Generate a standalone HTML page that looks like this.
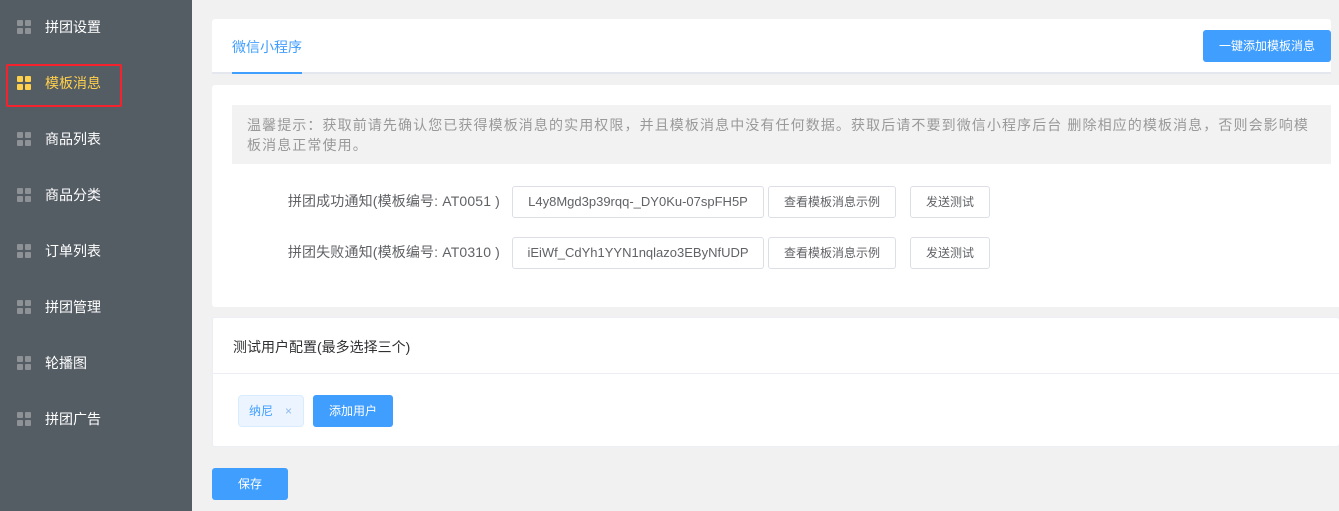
<!DOCTYPE html>
<html><head><meta charset="utf-8"><style>
*{margin:0;padding:0;box-sizing:border-box}
body{width:1339px;height:511px;background:#f1f1f1;font-family:"Liberation Sans","Noto Sans CJK SC",sans-serif;position:relative;overflow:hidden;font-size:14px;color:#606266}
.side{position:absolute;left:0;top:0;width:192px;height:511px;background:#545c64}
.item{position:absolute;left:0;width:192px;height:20px;color:#fff;font-size:14px;line-height:20px}
.item .ic{position:absolute;left:17px;top:3px;width:14px;height:14px}
.item .ic i{position:absolute;width:6px;height:6px;background:#8e9196;border-radius:1px}
.item span{position:absolute;left:45px;top:0}
.act{color:#ffd04b}.act .ic i{background:#ffd04b}
.abs{position:absolute}
.card{position:absolute;background:#fff;border-radius:3px}
.btn{position:absolute;background:#409eff;color:#fff;border-radius:3px;font-size:12px;text-align:center}
.wb{position:absolute;background:#fff;border:1px solid #dcdfe6;border-radius:3px;font-size:12px;text-align:center;color:#606266}
</style></head><body>
<div class="side">
<div class="abs" style="left:6px;top:64px;width:116px;height:43px;border:2px solid #f5222d;border-radius:2px"></div>
</div>
<div class="item" style="top:17px"><div class="ic"><i style="left:0;top:0"></i><i style="left:8px;top:0"></i><i style="left:0;top:8px"></i><i style="left:8px;top:8px"></i></div><span>拼团设置</span></div>
<div class="item act" style="top:73px"><div class="ic"><i style="left:0;top:0"></i><i style="left:8px;top:0"></i><i style="left:0;top:8px"></i><i style="left:8px;top:8px"></i></div><span>模板消息</span></div>
<div class="item" style="top:129px"><div class="ic"><i style="left:0;top:0"></i><i style="left:8px;top:0"></i><i style="left:0;top:8px"></i><i style="left:8px;top:8px"></i></div><span>商品列表</span></div>
<div class="item" style="top:185px"><div class="ic"><i style="left:0;top:0"></i><i style="left:8px;top:0"></i><i style="left:0;top:8px"></i><i style="left:8px;top:8px"></i></div><span>商品分类</span></div>
<div class="item" style="top:241px"><div class="ic"><i style="left:0;top:0"></i><i style="left:8px;top:0"></i><i style="left:0;top:8px"></i><i style="left:8px;top:8px"></i></div><span>订单列表</span></div>
<div class="item" style="top:297px"><div class="ic"><i style="left:0;top:0"></i><i style="left:8px;top:0"></i><i style="left:0;top:8px"></i><i style="left:8px;top:8px"></i></div><span>拼团管理</span></div>
<div class="item" style="top:353px"><div class="ic"><i style="left:0;top:0"></i><i style="left:8px;top:0"></i><i style="left:0;top:8px"></i><i style="left:8px;top:8px"></i></div><span>轮播图</span></div>
<div class="item" style="top:409px"><div class="ic"><i style="left:0;top:0"></i><i style="left:8px;top:0"></i><i style="left:0;top:8px"></i><i style="left:8px;top:8px"></i></div><span>拼团广告</span></div>

<div class="card" style="left:212px;top:19px;width:1119px;height:55px;border-radius:3px 3px 0 0">
<div class="abs" style="left:0;top:53px;width:1119px;height:2px;background:#e4e7ed"></div>
<div class="abs" style="left:20px;top:53px;width:70px;height:2px;background:#409eff"></div>
<div class="abs" style="left:20px;top:18px;color:#409eff;font-size:14px">微信小程序</div>
<div class="btn" style="left:991px;top:11px;width:128px;height:32px;line-height:32px">一键添加模板消息</div>
</div>

<div class="card" style="left:212px;top:85px;width:1127px;height:222px;border-radius:3px 0 0 3px">
<div class="abs" style="left:20px;top:20px;width:1099px;height:59px;background:#f2f2f2;color:#999;font-size:14px;line-height:20px;padding:10px 0 0 15px;white-space:nowrap;letter-spacing:1.1px">温馨提示：获取前请先确认您已获得模板消息的实用权限，并且模板消息中没有任何数据。获取后请不要到微信小程序后台 删除相应的模板消息，否则会影响模<br>板消息正常使用。</div>
<div class="abs" style="left:20px;top:106px;width:268px;text-align:right;font-size:14px;color:#606266;white-space:nowrap;letter-spacing:0.15px">拼团成功通知(模板编号: AT0051 )</div>
<div class="wb" style="left:300px;top:101px;width:252px;height:32px;line-height:30px;font-size:13px">L4y8Mgd3p39rqq-_DY0Ku-07spFH5P</div>
<div class="wb" style="left:556px;top:101px;width:128px;height:32px;line-height:30px">查看模板消息示例</div>
<div class="wb" style="left:698px;top:101px;width:80px;height:32px;line-height:30px">发送测试</div>
<div class="abs" style="left:20px;top:157px;width:268px;text-align:right;font-size:14px;color:#606266;white-space:nowrap;letter-spacing:0.15px">拼团失败通知(模板编号: AT0310 )</div>
<div class="wb" style="left:300px;top:152px;width:252px;height:32px;line-height:30px;font-size:13px">iEiWf_CdYh1YYN1nqlazo3EByNfUDP</div>
<div class="wb" style="left:556px;top:152px;width:128px;height:32px;line-height:30px">查看模板消息示例</div>
<div class="wb" style="left:698px;top:152px;width:80px;height:32px;line-height:30px">发送测试</div>
</div>

<div class="card" style="left:212px;top:317px;width:1127px;height:130px;border:1px solid #ebeef5;border-right:none">
<div class="abs" style="left:20px;top:19px;color:#303133;font-size:14px">测试用户配置(最多选择三个)</div>
<div class="abs" style="left:0;top:55px;width:1127px;height:1px;background:#ebeef5"></div>
<div class="abs" style="left:25px;top:77px;width:66px;height:32px;background:#ecf5ff;border:1px solid #d9ecff;border-radius:4px;color:#409eff;font-size:12px;line-height:30px;padding-left:10px">纳尼<span style="position:absolute;left:46px;color:#8cb9ee">×</span></div>
<div class="btn" style="left:100px;top:77px;width:80px;height:32px;line-height:32px">添加用户</div>
</div>

<div class="btn" style="left:212px;top:468px;width:76px;height:32px;line-height:32px">保存</div>
</body></html>
